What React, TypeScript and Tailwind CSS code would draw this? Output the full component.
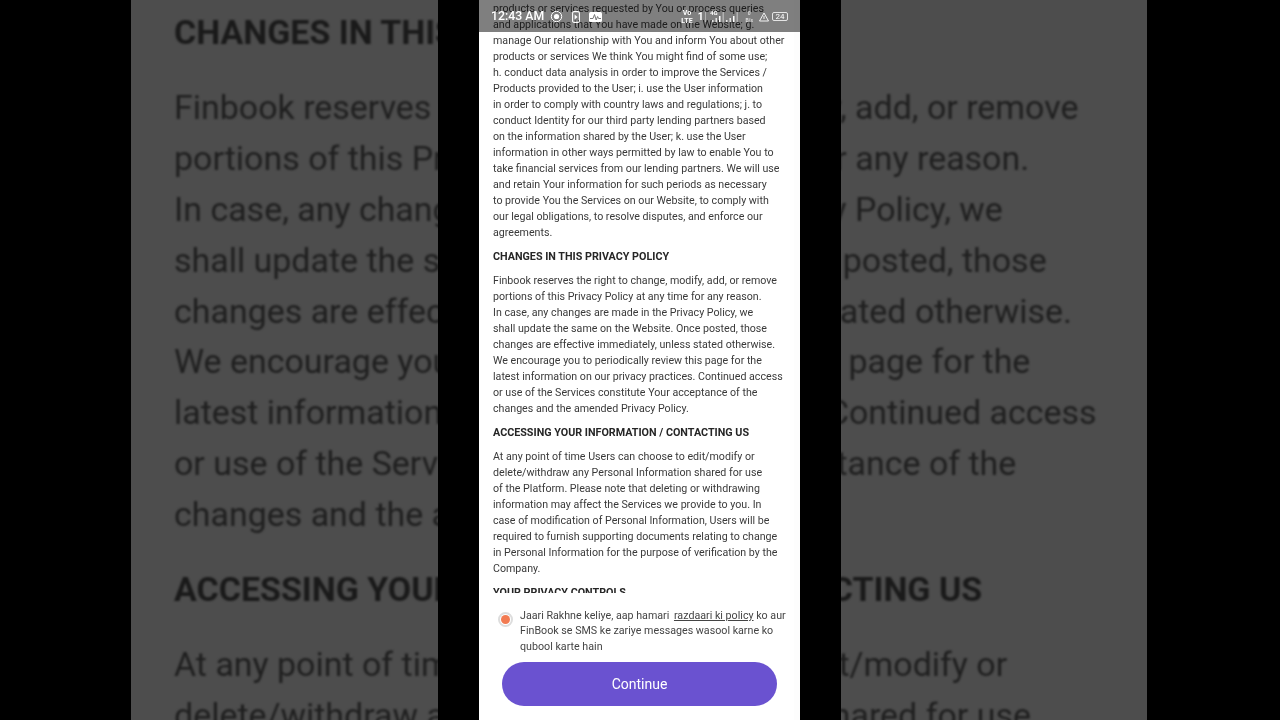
import React from 'react';

const FONT = "font-['Roboto','Liberation_Sans',sans-serif]";

type Line = { text: string; heading?: boolean };

const phoneLines: Line[] = [
  { text: 'products or services requested by You or process queries' },
  { text: 'and applications that You have made on the Website; g.' },
  { text: 'manage Our relationship with You and inform You about other' },
  { text: 'products or services We think You might find of some use;' },
  { text: 'h. conduct data analysis in order to improve the Services /' },
  { text: 'Products provided to the User; i. use the User information' },
  { text: 'in order to comply with country laws and regulations; j. to' },
  { text: 'conduct Identity for our third party lending partners based' },
  { text: 'on the information shared by the User; k. use the User' },
  { text: 'information in other ways permitted by law to enable You to' },
  { text: 'take financial services from our lending partners. We will use' },
  { text: 'and retain Your information for such periods as necessary' },
  { text: 'to provide You the Services on our Website, to comply with' },
  { text: 'our legal obligations, to resolve disputes, and enforce our' },
  { text: 'agreements.' },
  { text: 'CHANGES IN THIS PRIVACY POLICY', heading: true },
  { text: 'Finbook reserves the right to change, modify, add, or remove' },
  { text: 'portions of this Privacy Policy at any time for any reason.' },
  { text: 'In case, any changes are made in the Privacy Policy, we' },
  { text: 'shall update the same on the Website. Once posted, those' },
  { text: 'changes are effective immediately, unless stated otherwise.' },
  { text: 'We encourage you to periodically review this page for the' },
  { text: 'latest information on our privacy practices. Continued access' },
  { text: 'or use of the Services constitute Your acceptance of the' },
  { text: 'changes and the amended Privacy Policy.' },
  { text: 'ACCESSING YOUR INFORMATION / CONTACTING US', heading: true },
  { text: 'At any point of time Users can choose to edit/modify or' },
  { text: 'delete/withdraw any Personal Information shared for use' },
  { text: 'of the Platform. Please note that deleting or withdrawing' },
  { text: 'information may affect the Services we provide to you. In' },
  { text: 'case of modification of Personal Information, Users will be' },
  { text: 'required to furnish supporting documents relating to change' },
  { text: 'in Personal Information for the purpose of verification by the' },
  { text: 'Company.' },
  { text: 'YOUR PRIVACY CONTROLS', heading: true },
];

// the blurred backdrop is the same page, zoomed in
const backdropLines = phoneLines.slice(15, 28);

const StatusBar = () => (
  <div className="absolute top-0 left-0 right-0 h-8 bg-black/50 flex items-center text-white pl-3 pr-3 pt-px blur-[0.3px]">
    <span className="text-[12.3px] font-medium leading-none">12:43 AM</span>
    <svg className="ml-[6px]" width="13" height="13" viewBox="0 0 13 13">
      <circle cx="6.5" cy="6.5" r="5.2" fill="none" stroke="white" strokeWidth="1" />
      <circle cx="6.5" cy="6.5" r="2.6" fill="white" />
    </svg>
    <svg className="ml-[9px]" width="8" height="12" viewBox="0 0 8 12">
      <rect x="0.6" y="0.6" width="6.8" height="10.8" rx="1.5" fill="none" stroke="white" strokeWidth="1.1" />
      <path d="M2.6 3.5 L5.6 6 L2.6 8.5 Z" fill="white" />
    </svg>
    <svg className="ml-[9px]" width="13" height="10" viewBox="0 0 13 10">
      <rect width="13" height="10" rx="1.5" fill="white" />
      <path d="M1 6.5 H4 L5.5 2.5 L7.2 8 L8.6 4.5 L9.6 6.5 H12" fill="none" stroke="#777" strokeWidth="1" />
    </svg>
    <div className="ml-auto flex items-center">
      <div className="flex flex-col items-center text-[7px] font-bold leading-[8px]">
        <span>Vo</span>
        <span>LTE</span>
      </div>
      <span className="ml-[5px] text-[10px] font-bold leading-none">1</span>
      <svg className="ml-[2px]" width="20" height="16" viewBox="0 0 20 16">
        <text x="5" y="6" fill="white" fontSize="6" fontWeight="700">4G</text>
        <rect x="0" y="3" width="1" height="10" fill="white" opacity="0.4" />
        <rect x="7" y="11" width="1.5" height="2" fill="white" opacity="0.8" />
        <rect x="10.5" y="9" width="1.5" height="4" fill="white" opacity="0.8" />
        <rect x="14" y="7" width="1.5" height="6" fill="white" />
        <rect x="17.5" y="3" width="1.5" height="10" fill="white" opacity="0.4" />
      </svg>
      <svg className="ml-[1px]" width="14" height="14" viewBox="0 0 14 14">
        <rect x="0" y="10" width="1.5" height="2" fill="white" opacity="0.8" />
        <rect x="3.5" y="8" width="1.5" height="4" fill="white" opacity="0.8" />
        <rect x="7" y="6" width="1.5" height="6" fill="white" />
        <rect x="10.5" y="2" width="1.5" height="10" fill="white" opacity="0.4" />
      </svg>
      <div className="ml-[5px] flex flex-col items-center text-[5px] font-bold leading-[7px] opacity-70">
        <span>0</span>
        <span>B/s</span>
      </div>
      <svg className="ml-[6px]" width="10" height="10" viewBox="0 0 10 10">
        <path d="M5 1 L9.5 9 H0.5 Z" fill="none" stroke="white" strokeWidth="0.9" />
        <path d="M5 4 V7" stroke="white" strokeWidth="0.9" />
      </svg>
      <div className="ml-[3px] w-4 h-[9px] border border-white/80 rounded-[2px] flex items-center justify-center text-[8px] leading-none">
        24
      </div>
    </div>
  </div>
);

const PolicyText = () => (
  <div className="h-[593px] overflow-hidden pl-[14px] pt-px text-[#3a3a3a] text-[10.66px] leading-4 whitespace-nowrap blur-[0.35px]">
    {phoneLines.map((line, i) =>
      line.heading ? (
        <div key={i} className="font-bold text-[10.75px] text-[#262626] mt-2 mb-2">
          {line.text}
        </div>
      ) : (
        <div key={i}>{line.text}</div>
      )
    )}
  </div>
);

export default function App() {
  return (
    <div className={`w-screen h-screen overflow-hidden bg-black grid place-items-start ${FONT}`}>
      {/* blurred backdrop */}
      <div className="[grid-area:1/1] ml-[131px] w-[1016px] h-[720px] overflow-hidden bg-[#4d4d4d] pl-[43px]">
        <div className="blur-[0.9px] text-[#1f1f1f] text-[33.95px] leading-[50.9px] whitespace-nowrap pt-[8px]">
          {backdropLines.map((line, i) =>
            line.heading ? (
              <div key={i} className="font-bold mt-[24px] mb-[24px] first:mt-0 text-[#1a1a1a]">
                {line.text}
              </div>
            ) : (
              <div key={i}>{line.text}</div>
            )
          )}
        </div>
      </div>

      {/* video column */}
      <div className="relative [grid-area:1/1] ml-[438px] w-[403px] h-[720px] bg-black flex justify-center">
        <div className="relative w-[321px] h-[720px] bg-white overflow-hidden">
          <PolicyText />
          <div className="absolute top-0 bottom-0 right-0 w-[6px] bg-[#fdfdfd]" />
          <StatusBar />
          <div className="flex items-start pl-[19px] mt-[15px] blur-[0.3px]">
            <span className="mt-[4px] w-[15px] h-[15px] shrink-0 rounded-full bg-white border-2 border-[#ddd] flex items-center justify-center">
              <span className="w-[9px] h-[9px] rounded-full bg-[#f27b52]" />
            </span>
            <p className="ml-[7px] text-[10.7px] leading-[15.4px] text-[#444] whitespace-nowrap">
              Jaari Rakhne keliye, aap hamari <span className="underline ml-[2px]">razdaari ki policy</span> ko aur
              <br />
              FinBook se SMS ke zariye messages wasool karne ko
              <br />
              qubool karte hain
            </p>
          </div>
          <button className="block ml-[23px] mt-[8px] w-[275px] h-[44px] rounded-full bg-[#6a52d0] text-white text-[14px] leading-none blur-[0.2px]">
            Continue
          </button>
        </div>
      </div>
    </div>
  );
}
